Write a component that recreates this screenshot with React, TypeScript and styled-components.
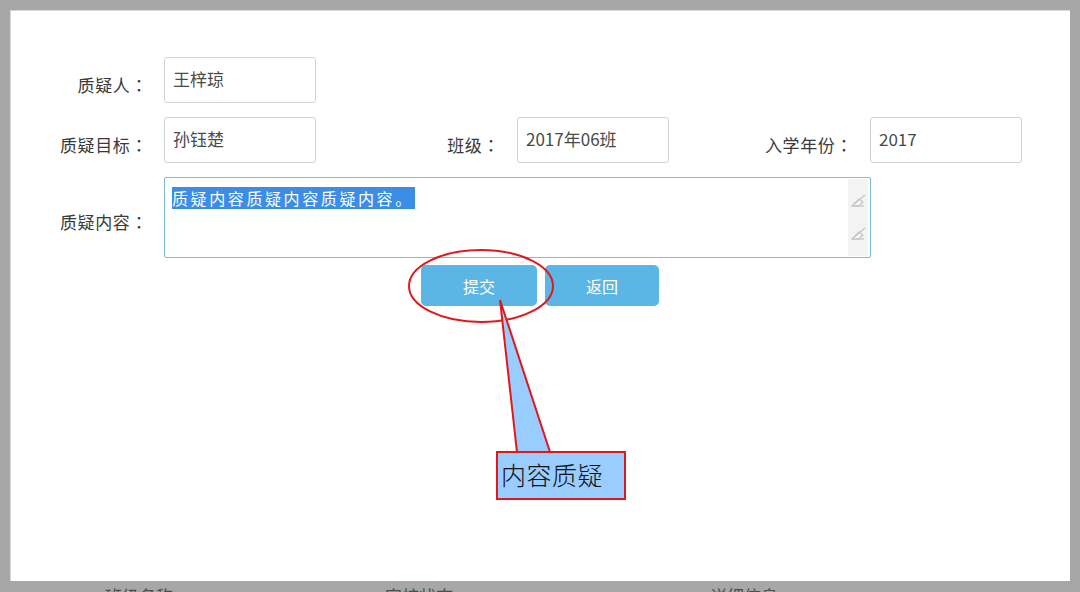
import React from "react";
import styled, { createGlobalStyle } from "styled-components";

const Global = createGlobalStyle`
  html, body { margin: 0; padding: 0; background: #a7a7a7; }
  body { font-family: "Noto Sans CJK SC", "Noto Sans", sans-serif; }
  * { box-sizing: border-box; }
`;

const Page = styled.div`
  position: relative;
  width: 1080px;
  height: 592px;
  overflow: hidden;
  background: #a7a7a7;
  display: flex;
  flex-direction: column;
`;

const Panel = styled.div`
  margin: 10px 10px 0 10px;
  height: 571px;
  background: #ffffff;
  box-shadow: inset 1px 1px 0 #d8d8d8;
  padding: 47px 0 0 40px;
  display: flex;
  flex-direction: column;
`;

const Row = styled.div<{ $mt?: number }>`
  display: flex;
  align-items: flex-start;
  margin-top: ${(p) => p.$mt ?? 0}px;
`;

const Label = styled.div<{ $w: number; $gap: number; $pt?: number }>`
  width: ${(p) => p.$w}px;
  margin-right: ${(p) => p.$gap}px;
  padding-top: ${(p) => p.$pt ?? 10}px;
  line-height: 36px;
  text-align: right;
  font-size: 17px;
  letter-spacing: 0.6px;
  color: #3a3a3a;
  white-space: nowrap;
`;

const Colon = styled.span`
  font-family: "Noto Sans CJK TC", "Noto Sans CJK SC", sans-serif;
`;

const Input = styled.div`
  width: 152px;
  height: 46px;
  border: 1px solid #d2d2d2;
  border-radius: 3px;
  padding: 0 8px;
  line-height: 42px;
  font-size: 17px;
  color: #4a4a4a;
  white-space: nowrap;
`;

const TextArea = styled.div`
  position: relative;
  width: 707px;
  height: 81px;
  border: 1px solid #7dbbdd;
  border-radius: 2px;
  padding: 8px 0 0 7px;
  display: flex;
`;

const TextBody = styled.div`
  flex: 1;
`;

const Selected = styled.span`
  background: #3c8de6;
  color: #ffffff;
  font-size: 16px;
  letter-spacing: 2.6px;
  line-height: 22px;
  display: inline-block;
  padding-right: 1px;
`;

const ScrollCol = styled.div`
  width: 20px;
  margin: -7px 2px 1px 0;
  background: #f3f3f3;
  display: flex;
  flex-direction: column;
  align-items: center;
  justify-content: space-around;
  padding: 6px 0;
`;

const Buttons = styled.div`
  display: flex;
  gap: 8px;
  margin-top: 7px;
  margin-left: 371px;
`;

const Button = styled.div<{ $w: number }>`
  width: ${(p) => p.$w}px;
  height: 41px;
  background: #5bb6e6;
  border-radius: 5px;
  color: #ffffff;
  font-size: 16px;
  display: flex;
  align-items: center;
  justify-content: center;
`;

const Strip = styled.div`
  height: 11px;
  overflow: hidden;
  display: flex;
  padding-left: 105px;
`;

const StripItem = styled.div<{ $w: number }>`
  width: ${(p) => p.$w}px;
  font-size: 17px;
  line-height: 20px;
  color: #4d4d4d;
  margin-top: 5px;
  white-space: nowrap;
`;

const Overlay = styled.svg`
  position: absolute;
  left: 0;
  top: 0;
  pointer-events: none;
`;

const Callout = styled.div`
  position: absolute;
  left: 496px;
  top: 451px;
  width: 130px;
  height: 49px;
  background: #99ccff;
  border: 2px solid #e0181b;
  font-size: 25px;
  font-weight: 300;
  color: #111111;
  line-height: 42px;
  padding-left: 3px;
  letter-spacing: 0.5px;
`;

const EraserIcon = () => (
  <svg width="16" height="16" viewBox="0 0 16 16">
    <path d="M2 13 L9 6 L13 9 L9 13 Z" fill="none" stroke="#c4c4c4" strokeWidth="1.2" />
    <path d="M2 13 L14 13" stroke="#c4c4c4" strokeWidth="1.2" />
    <path d="M4 11 L15 2" stroke="#c4c4c4" strokeWidth="1.2" />
  </svg>
);

export default function App() {
  return (
    <>
      <Global />
      <Page>
        <Panel>
          <Row>
            <Label $w={98} $gap={16}>质疑人<Colon>：</Colon></Label>
            <Input>王梓琼</Input>
          </Row>
          <Row $mt={14}>
            <Label $w={98} $gap={16}>质疑目标<Colon>：</Colon></Label>
            <Input>孙钰楚</Input>
            <Label $w={184} $gap={17}>班级<Colon>：</Colon></Label>
            <Input>2017年06班</Input>
            <Label $w={184} $gap={17}>入学年份<Colon>：</Colon></Label>
            <Input>2017</Input>
          </Row>
          <Row $mt={14}>
            <Label $w={98} $gap={16} $pt={27}>质疑内容<Colon>：</Colon></Label>
            <TextArea>
              <TextBody>
                <Selected>质疑内容质疑内容质疑内容。</Selected>
              </TextBody>
              <ScrollCol>
                <EraserIcon />
                <EraserIcon />
              </ScrollCol>
            </TextArea>
          </Row>
          <Buttons>
            <Button $w={116}>提交</Button>
            <Button $w={114}>返回</Button>
          </Buttons>
        </Panel>
        <Strip>
          <StripItem $w={280}>班级名称</StripItem>
          <StripItem $w={325}>审核状态</StripItem>
          <StripItem $w={200}>详细信息</StripItem>
        </Strip>
        <Overlay width="1080" height="592" viewBox="0 0 1080 592">
          <ellipse cx="481" cy="286" rx="72" ry="36" fill="none" stroke="#e0181b" strokeWidth="2" />
          <polygon points="500,300 517,452 550,452" fill="#99ccff" stroke="#e0181b" strokeWidth="2" strokeLinejoin="miter" />
        </Overlay>
        <Callout>内容质疑</Callout>
      </Page>
    </>
  );
}
